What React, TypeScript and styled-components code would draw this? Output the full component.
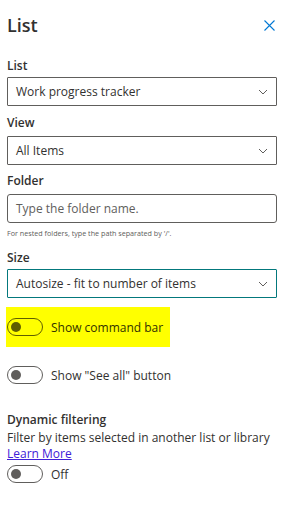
import styled, { createGlobalStyle } from 'styled-components'

const GlobalStyle = createGlobalStyle`
    body {
        margin: 0;
        background: #ffffff;
        font-family: "Open Sans", "Noto Sans", sans-serif;
        color: #323130;
    }
`

const Panel = styled.div`
    width: 288px;
    height: 517px;
    box-sizing: border-box;
    padding: 10px 11px 0 7px;
    background: #fff;
`
const Header = styled.div`
    display: flex;
    align-items: center;
    justify-content: space-between;
    height: 30px;
`
const Title = styled.h1`
    margin: 0;
    font-size: 18px;
    font-weight: 600;
    line-height: 30px;
    color: #323130;
`
const CloseButton = styled.button`
    display: flex;
    align-items: center;
    justify-content: center;
    width: 20px;
    height: 20px;
    margin-right: -2px;
    padding: 0;
    border: none;
    background: none;
    cursor: pointer;
`
const Label = styled.div`
    font-size: 12px;
    font-weight: 600;
    line-height: 20px;
    height: 20px;
`
const Field = styled.div<{ top: number; labelGap?: number }>`
    margin-top: ${props => props.top}px;

    & > ${Label} {
        margin-bottom: ${props => props.labelGap ?? 3}px;
    }
`
const Box = styled.div<{ focused?: boolean; rounded?: boolean }>`
    display: flex;
    align-items: center;
    justify-content: space-between;
    height: 29px;
    box-sizing: border-box;
    padding: 0 8px 0 8px;
    border: 1px solid ${props => props.focused ? '#03787c' : '#605e5c'};
    border-radius: ${props => props.rounded ? '3px' : '1px'};
    font-size: 12px;
`
const BoxText = styled.span<{ placeholder?: boolean }>`
    color: ${props => props.placeholder ? '#605e5c' : '#323130'};
    white-space: nowrap;
`
const Help = styled.div`
    margin-top: 3px;
    font-size: 7.2px;
    line-height: 14px;
    color: #605e5c;
`
const ToggleRow = styled.div<{ highlight?: boolean; top: number }>`
    display: inline-flex;
    align-items: center;
    gap: 8px;
    margin-top: ${props => props.top}px;
    margin-left: ${props => props.highlight ? '-1px' : '0'};
    height: 40px;
    padding: 0 7px 0 ${props => props.highlight ? '1px' : '0'};
    background: ${props => props.highlight ? '#ffff00' : 'transparent'};
    color: ${props => props.highlight ? '#323100' : '#323130'};
    font-size: 12px;
`
const Track = styled.span<{ highlight?: boolean }>`
    position: relative;
    display: inline-block;
    width: 36px;
    height: 18px;
    box-sizing: border-box;
    border: 1px solid ${props => props.highlight ? '#605e00' : '#605e5c'};
    border-radius: 9px;
`
const Thumb = styled.span<{ highlight?: boolean }>`
    position: absolute;
    left: 3px;
    top: 3px;
    width: 10px;
    height: 10px;
    border-radius: 50%;
    background: ${props => props.highlight ? '#605e00' : '#605e5c'};
`
const Section = styled.div`
    margin-top: 15px;
`
const Desc = styled.div`
    font-size: 12px;
    line-height: 16px;
    white-space: nowrap;
`
const Link = styled.a`
    display: block;
    font-size: 12px;
    line-height: 16px;
    color: #4020d8;
    text-decoration: underline;
`
const OffRow = styled.div`
    display: flex;
    align-items: center;
    gap: 8px;
    margin-top: 3px;
    height: 18px;
    font-size: 12px;
`

const Chevron = () => (
    <svg width="10" height="6" viewBox="0 0 10 6">
        <polyline points="1,1 5,5 9,1" fill="none" stroke="#605e5c" strokeWidth="1" />
    </svg>
)

const Toggle = ({ highlight }: { highlight?: boolean }) => (
    <Track highlight={highlight}><Thumb highlight={highlight} /></Track>
)

export default function App() {
    return (
        <>
            <GlobalStyle />
            <Panel>
                <Header>
                    <Title>List</Title>
                    <CloseButton aria-label="Close">
                        <svg width="11" height="11" viewBox="0 0 11 11">
                            <path d="M0.5 0.5 L10.5 10.5 M10.5 0.5 L0.5 10.5" stroke="#0078d4" strokeWidth="1.1" />
                        </svg>
                    </CloseButton>
                </Header>

                <Field top={16} labelGap={1}>
                    <Label>List</Label>
                    <Box><BoxText>Work progress tracker</BoxText><Chevron /></Box>
                </Field>
                <Field top={7}>
                    <Label>View</Label>
                    <Box><BoxText>All Items</BoxText><Chevron /></Box>
                </Field>
                <Field top={6}>
                    <Label>Folder</Label>
                    <Box rounded><BoxText placeholder>Type the folder name.</BoxText></Box>
                    <Help>For nested folders, type the path separated by '/'.</Help>
                </Field>
                <Field top={8} labelGap={1}>
                    <Label>Size</Label>
                    <Box focused><BoxText>Autosize - fit to number of items</BoxText><Chevron /></Box>
                </Field>

                <div>
                    <ToggleRow highlight top={9}><Toggle highlight />Show command bar</ToggleRow>
                </div>
                <div>
                    <ToggleRow top={8}><Toggle />Show "See all" button</ToggleRow>
                </div>

                <Section>
                    <Label>Dynamic filtering</Label>
                    <Desc>Filter by items selected in another list or library</Desc>
                    <Link href="#">Learn More</Link>
                    <OffRow><Toggle />Off</OffRow>
                </Section>
            </Panel>
        </>
    )
}
